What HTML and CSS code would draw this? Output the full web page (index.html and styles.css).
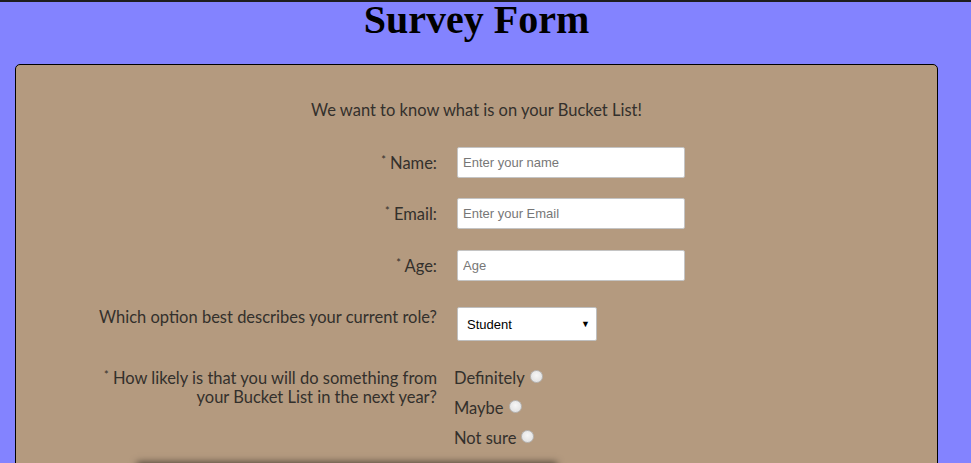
FILE: index.html
```html
<!DOCTYPE html>
<html lang="en">
<head>
<meta charset="utf-8">
<title>Survey Form</title>
<link rel="stylesheet" href="styles.css">
</head>
<body>
<div class="page">
  <h1 class="title">Survey Form</h1>
  <div class="card">
    <p class="intro">We want to know what is on your Bucket List!</p>
    <form class="form">
      <div class="row">
        <label class="label label-input" for="name"><span class="req">*</span> Name:</label>
        <input class="field" id="name" type="text" placeholder="Enter your name">
      </div>
      <div class="row row-email">
        <label class="label label-input" for="email"><span class="req">*</span> Email:</label>
        <input class="field" id="email" type="email" placeholder="Enter your Email">
      </div>
      <div class="row row-age">
        <label class="label label-input" for="age"><span class="req">*</span> Age:</label>
        <input class="field" id="age" type="text" placeholder="Age">
      </div>
      <div class="row row-select">
        <label class="label" for="role">Which option best describes your current role?</label>
        <div class="select">
          <span class="select-value">Student</span>
          <span class="select-arrow">&#9660;</span>
        </div>
      </div>
      <div class="row row-radio">
        <div class="label label-radio"><span class="req">*</span> How likely is that you will do something from<br>your Bucket List in the next year?</div>
        <div class="options">
          <label class="option">Definitely <input class="radio" type="radio" name="likely"></label>
          <label class="option">Maybe <input class="radio" type="radio" name="likely"></label>
          <label class="option">Not sure <input class="radio" type="radio" name="likely"></label>
        </div>
      </div>
      <div class="next-box"></div>
    </form>
  </div>
</div>
</body>
</html>
```
FILE: styles.css
```css
html, body {
  margin: 0;
  padding: 0;
}
body {
  background: #8383ff;
  border-top: 2px solid #1e1e1e;
  font-family: "Lato", "Open Sans", sans-serif;
  color: #33302c;
  overflow: hidden;
}
.page {
  width: 953px;
}
.title {
  margin: 0;
  font-family: "Liberation Serif", "Times New Roman", serif;
  font-weight: bold;
  font-size: 40px;
  line-height: 36px;
  text-align: center;
  color: #000;
}
.card {
  margin: 26px 15px 0 15px;
  background: #b49a7f;
  border: 1px solid #000;
  border-radius: 5px;
  padding-top: 35px;
  height: 600px;
  box-sizing: border-box;
}
.intro {
  margin: 0;
  font-size: 16.5px;
  line-height: 20px;
  text-align: center;
}
.form {
  margin-top: 27px;
  display: flex;
  flex-direction: column;
}
.row {
  display: grid;
  grid-template-columns: 421px 228px;
  column-gap: 20px;
  align-items: start;
}
.row-email { margin-top: 20px; }
.row-age { margin-top: 21px; }
.row-select { margin-top: 26px; }
.row-radio { margin-top: 22px; grid-template-columns: 421px 228px; column-gap: 17px; }
.label {
  font-size: 16.5px;
  line-height: 20px;
  text-align: right;
}
.label-input {
  padding-top: 3px;
}
.label-radio {
  padding-top: 3px;
  line-height: 18.5px;
}
.req {
  font-size: 11px;
  vertical-align: 5px;
}
.field {
  box-sizing: border-box;
  width: 228px;
  height: 31px;
  margin: 0;
  border: 1px solid #c4c4c4;
  border-radius: 2px;
  background: #fff;
  padding: 0 5px;
  font-family: "Liberation Sans", Arial, sans-serif;
  font-size: 13px;
  color: #000;
}
.field::placeholder {
  color: #777;
}
.select {
  box-sizing: border-box;
  width: 140px;
  height: 34px;
  border: 1px solid #bfbfbf;
  border-radius: 2px;
  background: #fff;
  display: flex;
  align-items: center;
  justify-content: space-between;
  padding: 0 6px 0 9px;
  font-family: "Liberation Sans", Arial, sans-serif;
  font-size: 13px;
  color: #000;
}
.select-arrow {
  font-size: 9px;
}
.options {
  display: flex;
  flex-direction: column;
  align-items: flex-start;
}
.option {
  font-size: 16.5px;
  line-height: 30px;
  display: flex;
  align-items: center;
  gap: 5px;
}
.radio {
  appearance: none;
  -webkit-appearance: none;
  margin: 0 0 3px 0;
  width: 13px;
  height: 13px;
  border-radius: 50%;
  border: 1px solid #b8b8b8;
  background: radial-gradient(circle at 50% 40%, #f6f6f6 0%, #dcdcdc 100%);
  box-sizing: border-box;
}
.next-box {
  margin: 10px 0 0 122px;
  width: 418px;
  height: 80px;
  background: #b49a7f;
  box-shadow: 0 0 7px 1px rgba(0, 0, 0, 0.55);
}
```
